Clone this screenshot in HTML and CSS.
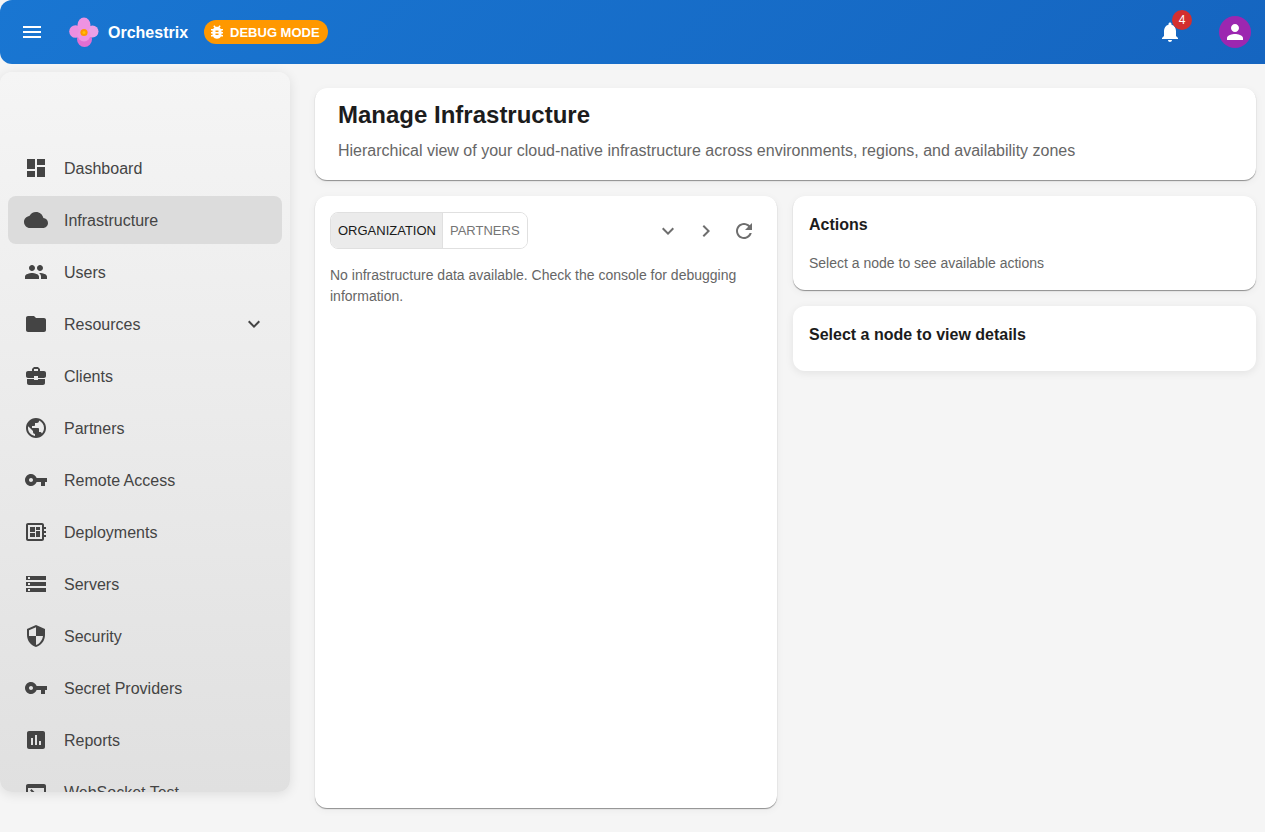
FILE: index.html
```html
<!DOCTYPE html>
<html lang="en">
<head>
    <meta charset="UTF-8">
    <title>Orchestrix - Manage Infrastructure</title>
    <meta name="viewport" content="width=device-width, initial-scale=1.0">
    <link rel="stylesheet" href="styles.css">
</head>
<body>
    <header class="topbar">
        <button class="menu-btn" aria-label="Menu">
            <svg class="icon" viewBox="0 0 24 24"><path d="M3 18h18v-2H3v2zm0-5h18v-2H3v2zm0-7v2h18V6H3z"/></svg>
        </button>
        <svg class="logo" viewBox="0 0 30 30">
            <circle cx="15.5" cy="22.5" r="7.5" fill="#e26fd2"/>
            <circle cx="6.5" cy="14.5" r="6.3" fill="#ec8fe0"/>
            <circle cx="23.5" cy="14.5" r="6" fill="#eba0e6"/>
            <ellipse cx="15" cy="8" rx="6.5" ry="7.5" fill="#ee93e2"/>
            <circle cx="15" cy="18" r="6.5" fill="#ee93e2"/>
            <circle cx="15" cy="15.5" r="3.6" fill="#ff9800"/>
            <circle cx="15" cy="15.5" r="1.5" fill="#ffc107"/>
        </svg>
        <span class="brand">Orchestrix</span>
        <span class="debug-chip">
            <svg class="chip-icon" viewBox="0 0 24 24"><path d="M20 8h-2.81c-.45-.78-1.07-1.45-1.82-1.96L17 4.41 15.59 3l-2.17 2.17C12.96 5.06 12.49 5 12 5c-.49 0-.96.06-1.41.17L8.41 3 7 4.41l1.62 1.63C7.88 6.55 7.26 7.22 6.81 8H4v2h2.09c-.05.33-.09.66-.09 1v1H4v2h2v1c0 .34.04.67.09 1H4v2h2.81c1.04 1.79 2.97 3 5.19 3s4.15-1.21 5.19-3H20v-2h-2.09c.05-.33.09-.66.09-1v-1h2v-2h-2v-1c0-.34-.04-.67-.09-1H20V8zm-6 8h-4v-2h4v2zm0-4h-4v-2h4v2z"/></svg>
            DEBUG MODE
        </span>
        <div class="topbar-right">
            <div class="bell">
                <svg class="icon" viewBox="0 0 24 24"><path d="M12 22c1.1 0 2-.9 2-2h-4c0 1.1.89 2 2 2zm6-6v-5c0-3.07-1.64-5.64-4.5-6.32V4c0-.83-.67-1.5-1.5-1.5s-1.5.67-1.5 1.5v.68C7.63 5.36 6 7.92 6 11v5l-2 2v1h16v-1l-2-2z"/></svg>
                <span class="badge">4</span>
            </div>
            <div class="avatar">
                <svg class="icon" viewBox="0 0 24 24"><path d="M12 12c2.21 0 4-1.79 4-4s-1.79-4-4-4-4 1.79-4 4 1.79 4 4 4zm0 2c-2.67 0-8 1.34-8 4v2h16v-2c0-2.66-5.33-4-8-4z"/></svg>
            </div>
        </div>
    </header>

    <div class="layout">
        <nav class="sidebar">
            <a class="nav-item">
                <svg class="icon" viewBox="0 0 24 24"><path d="M3 13h8V3H3v10zm0 8h8v-6H3v6zm10 0h8V11h-8v10zm0-18v6h8V3h-8z"/></svg>
                <span>Dashboard</span>
            </a>
            <a class="nav-item active">
                <svg class="icon" viewBox="0 0 24 24"><path d="M19.35 10.04C18.67 6.59 15.64 4 12 4 9.11 4 6.6 5.64 5.35 8.04 2.34 8.36 0 10.91 0 14c0 3.31 2.69 6 6 6h13c2.76 0 5-2.24 5-5 0-2.64-2.05-4.78-4.65-4.96z"/></svg>
                <span>Infrastructure</span>
            </a>
            <a class="nav-item">
                <svg class="icon" viewBox="0 0 24 24"><path d="M16 11c1.66 0 2.99-1.34 2.99-3S17.66 5 16 5c-1.66 0-3 1.34-3 3s1.34 3 3 3zm-8 0c1.66 0 2.99-1.34 2.99-3S9.66 5 8 5C6.34 5 5 6.34 5 8s1.34 3 3 3zm0 2c-2.33 0-7 1.17-7 3.5V19h14v-2.5c0-2.33-4.67-3.5-7-3.5zm8 0c-.29 0-.62.02-.97.05 1.16.84 1.97 1.97 1.97 3.45V19h6v-2.5c0-2.33-4.67-3.5-7-3.5z"/></svg>
                <span>Users</span>
            </a>
            <a class="nav-item">
                <svg class="icon" viewBox="0 0 24 24"><path d="M10 4H4c-1.1 0-1.99.9-1.99 2L2 18c0 1.1.9 2 2 2h16c1.1 0 2-.9 2-2V8c0-1.1-.9-2-2-2h-8l-2-2z"/></svg>
                <span>Resources</span>
                <svg class="icon expand" viewBox="0 0 24 24"><path d="M16.59 8.59 12 13.17 7.41 8.59 6 10l6 6 6-6z"/></svg>
            </a>
            <a class="nav-item">
                <svg class="icon" viewBox="0 0 24 24"><path d="M10 16v-1H3.01L3 19c0 1.11.89 2 2 2h14c1.11 0 2-.89 2-2v-4h-7v1h-4zm10-9h-4.01V5l-2-2h-4l-2 2v2H4c-1.1 0-2 .9-2 2v3c0 1.11.89 2 2 2h6v-2h4v2h6c1.1 0 2-.9 2-2V9c0-1.1-.9-2-2-2zm-6 0h-4V5h4v2z"/></svg>
                <span>Clients</span>
            </a>
            <a class="nav-item">
                <svg class="icon" viewBox="0 0 24 24"><path d="M12 2C6.48 2 2 6.48 2 12s4.48 10 10 10 10-4.48 10-10S17.52 2 12 2zm-1 17.93c-3.95-.49-7-3.85-7-7.93 0-.62.08-1.21.21-1.79L9 15v1c0 1.1.9 2 2 2v1.93zm6.9-2.54c-.26-.81-1-1.39-1.9-1.39h-1v-3c0-.55-.45-1-1-1H8v-2h2c.55 0 1-.45 1-1V7h2c1.1 0 2-.9 2-2v-.41c2.93 1.19 5 4.06 5 7.41 0 2.08-.8 3.97-2.1 5.39z"/></svg>
                <span>Partners</span>
            </a>
            <a class="nav-item">
                <svg class="icon" viewBox="0 0 24 24"><path d="M12.65 10C11.83 7.67 9.61 6 7 6c-3.31 0-6 2.69-6 6s2.69 6 6 6c2.61 0 4.83-1.67 5.65-4H17v4h4v-4h2v-4H12.65zM7 14c-1.1 0-2-.9-2-2s.9-2 2-2 2 .9 2 2-.9 2-2 2z"/></svg>
                <span>Remote Access</span>
            </a>
            <a class="nav-item">
                <svg class="icon" viewBox="0 0 24 24"><path d="M22 9V7h-2V5c0-1.1-.9-2-2-2H4c-1.1 0-2 .9-2 2v14c0 1.1.9 2 2 2h14c1.1 0 2-.9 2-2v-2h2v-2h-2v-2h2v-2h-2V9h2zm-4 10H4V5h14v14zM6 13h5v4H6zm6-6h4v3h-4zM6 7h5v5H6zm6 4h4v6h-4z"/></svg>
                <span>Deployments</span>
            </a>
            <a class="nav-item">
                <svg class="icon" viewBox="0 0 24 24"><path d="M2 20h20v-4H2v4zm2-3h2v2H4v-2zM2 4v4h20V4H2zm4 3H4V5h2v2zm-4 7h20v-4H2v4zm2-3h2v2H4v-2z"/></svg>
                <span>Servers</span>
            </a>
            <a class="nav-item">
                <svg class="icon" viewBox="0 0 24 24"><path d="M12 1 3 5v6c0 5.55 3.84 10.74 9 12 5.16-1.26 9-6.45 9-12V5l-9-4zm0 10.99h7c-.53 4.12-3.28 7.79-7 8.94V12H5V6.3l7-3.11v8.8z"/></svg>
                <span>Security</span>
            </a>
            <a class="nav-item">
                <svg class="icon" viewBox="0 0 24 24"><path d="M12.65 10C11.83 7.67 9.61 6 7 6c-3.31 0-6 2.69-6 6s2.69 6 6 6c2.61 0 4.83-1.67 5.65-4H17v4h4v-4h2v-4H12.65zM7 14c-1.1 0-2-.9-2-2s.9-2 2-2 2 .9 2 2-.9 2-2 2z"/></svg>
                <span>Secret Providers</span>
            </a>
            <a class="nav-item">
                <svg class="icon" viewBox="0 0 24 24"><path d="M19 3H5c-1.1 0-2 .9-2 2v14c0 1.1.9 2 2 2h14c1.1 0 2-.9 2-2V5c0-1.1-.9-2-2-2zM9 17H7v-7h2v7zm4 0h-2V7h2v10zm4 0h-2v-4h2v4z"/></svg>
                <span>Reports</span>
            </a>
            <a class="nav-item">
                <svg class="icon" viewBox="0 0 24 24"><path d="M20 4H4c-1.1 0-2 .9-2 2v12c0 1.1.9 2 2 2h16c1.1 0 2-.9 2-2V6c0-1.1-.9-2-2-2zm0 14H4V8h16v10zm-2-1h-6v-2h6v2zM7.5 17l-1.41-1.41L8.67 13l-2.59-2.59L7.5 9l4 4-4 4z"/></svg>
                <span>WebSocket Test</span>
            </a>
        </nav>

        <main class="content">
            <section class="card page-head">
                <h1>Manage Infrastructure</h1>
                <p>Hierarchical view of your cloud-native infrastructure across environments, regions, and availability zones</p>
            </section>

            <div class="columns">
                <section class="card tree-panel">
                    <div class="tree-toolbar">
                        <div class="toggle-group">
                            <button class="toggle selected">ORGANIZATION</button>
                            <button class="toggle">PARTNERS</button>
                        </div>
                        <div class="tree-actions">
                            <svg class="icon" viewBox="0 0 24 24"><path d="M16.59 8.59 12 13.17 7.41 8.59 6 10l6 6 6-6z"/></svg>
                            <svg class="icon" viewBox="0 0 24 24"><path d="M10 6 8.59 7.41 13.17 12l-4.58 4.59L10 18l6-6z"/></svg>
                            <svg class="icon" viewBox="0 0 24 24"><path d="M17.65 6.35C16.2 4.9 14.21 4 12 4c-4.42 0-7.99 3.58-7.99 8s3.57 8 7.99 8c3.73 0 6.84-2.55 7.73-6h-2.08c-.82 2.33-3.04 4-5.65 4-3.31 0-6-2.69-6-6s2.69-6 6-6c1.66 0 3.14.69 4.22 1.78L13 11h7V4l-2.35 2.35z"/></svg>
                        </div>
                    </div>
                    <p class="muted">No infrastructure data available. Check the console for debugging information.</p>
                </section>

                <div class="side-col">
                    <section class="card side-card">
                        <h2>Actions</h2>
                        <p class="muted">Select a node to see available actions</p>
                    </section>
                    <section class="card details-card">
                        <h2>Select a node to view details</h2>
                    </section>
                </div>
            </div>
        </main>
    </div>
</body>
</html>
```

FILE: styles.css
```css
* { box-sizing: border-box; }

html, body { height: 100%; }

body {
    margin: 0;
    overflow: hidden;
    background: #f5f5f5;
    color: #1a1a1a;
    font-family: "Liberation Sans", Arial, sans-serif;
}

.icon {
    width: 24px;
    height: 24px;
    flex: none;
    fill: currentColor;
}

/* top bar */
.topbar {
    display: flex;
    align-items: center;
    height: 64px;
    padding: 0 14px 0 20px;
    color: #fff;
    background: linear-gradient(135deg, #1976d2, #1565c0);
    border-radius: 12px 0 0 12px;
}

.menu-btn {
    display: flex;
    padding: 0;
    color: inherit;
    background: none;
    border: none;
}

.logo {
    width: 30px;
    height: 30px;
    margin-left: 25px;
}

.brand {
    margin: 2px 0 0 9px;
    font-size: 16px;
    font-weight: 700;
}

.debug-chip {
    display: flex;
    align-items: center;
    gap: 4px;
    height: 24px;
    margin-left: 16px;
    padding: 0 8px 0 4px;
    font-size: 13px;
    font-weight: 700;
    background: #ff9800;
    border-radius: 12px;
}

.chip-icon {
    width: 18px;
    height: 18px;
    fill: #fff;
}

.topbar-right {
    display: flex;
    align-items: center;
    gap: 37px;
    margin-left: auto;
}

.bell {
    position: relative;
    display: flex;
}

.badge {
    position: absolute;
    top: -10px;
    right: -10px;
    width: 20px;
    height: 20px;
    font-size: 12px;
    line-height: 20px;
    text-align: center;
    background: #d32f2f;
    border-radius: 50%;
}

.avatar {
    display: flex;
    align-items: center;
    justify-content: center;
    width: 32px;
    height: 32px;
    background: #9c27b0;
    border-radius: 50%;
}

/* sidebar + content */
.layout {
    display: flex;
    align-items: flex-start;
}

.sidebar {
    flex: none;
    width: 290px;
    height: 720px;
    margin-top: 8px;
    padding: 72px 8px 0;
    overflow: hidden;
    background: linear-gradient(180deg, #f5f5f5, #e0e0e0);
    border-radius: 12px;
    box-shadow: 0 2px 12px rgba(0, 0, 0, 0.1);
}

.nav-item {
    display: flex;
    align-items: center;
    height: 48px;
    margin-bottom: 4px;
    padding: 0 16px;
    color: #444;
    font-size: 16px;
    border-radius: 8px;
}

.nav-item > span { margin: 2px 0 0 16px; }

.nav-item.active { background: #dcdcdc; }

.expand { margin-left: auto; }

.content {
    flex: 1;
    min-width: 0;
    padding: 24px 9px 0 25px;
}

.card {
    background: #fff;
    border-radius: 12px;
    box-shadow: 0 1px 1px rgba(0, 0, 0, 0.4), 0 2px 8px rgba(0, 0, 0, 0.05);
}

.page-head {
    height: 92px;
    padding: 12px 23px;
}

.page-head h1 {
    margin: 0;
    color: #1c1c1c;
    font-size: 24px;
    line-height: 30px;
    font-weight: 700;
}

.page-head p {
    margin: 9px 0 0;
    color: #666;
    font-size: 16px;
    line-height: 24px;
}

.columns {
    display: flex;
    gap: 16px;
    margin-top: 16px;
}

.tree-panel {
    flex: none;
    width: 462px;
    height: 612px;
    padding: 16px 15px;
}

.tree-toolbar {
    display: flex;
    align-items: center;
    justify-content: space-between;
    height: 38px;
}

.toggle-group {
    display: flex;
    align-self: flex-start;
    height: 37px;
    border: 1px solid #e0e0e0;
    border-radius: 8px;
    overflow: hidden;
}

.toggle {
    padding: 0 7px;
    color: #757575;
    font-family: inherit;
    font-size: 13px;
    background: #fff;
    border: none;
}

.toggle.selected {
    padding-right: 6px;
    color: #1a1a1a;
    background: #ebebeb;
    border-right: 1px solid #e0e0e0;
}

.tree-actions {
    display: flex;
    gap: 14px;
    margin-right: 6px;
    color: #6e6e6e;
}

.muted {
    margin: 0;
    color: #666;
    font-size: 14px;
    line-height: 21px;
}

.tree-panel .muted { margin-top: 15px; }

.side-col {
    flex: 1;
    display: flex;
    flex-direction: column;
    gap: 16px;
    min-width: 0;
}

.side-card {
    height: 94px;
    padding: 17px 16px;
}

.details-card {
    height: 65px;
    padding: 17px 16px;
    box-shadow: 0 2px 8px rgba(0, 0, 0, 0.08);
}

.side-col h2 {
    margin: 0;
    color: #1c1c1c;
    font-size: 16px;
    line-height: 24px;
    font-weight: 700;
}

.side-card .muted { margin-top: 16px; }
```
